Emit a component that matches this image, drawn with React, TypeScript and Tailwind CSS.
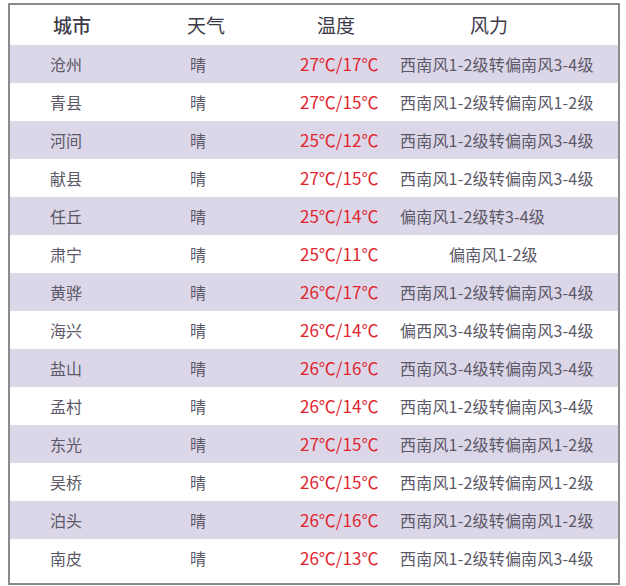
const rows: { city: string; temp: string; wind: string; center?: boolean }[] = [
  { city: "沧州", temp: "27℃/17℃", wind: "西南风1-2级转偏南风3-4级" },
  { city: "青县", temp: "27℃/15℃", wind: "西南风1-2级转偏南风1-2级" },
  { city: "河间", temp: "25℃/12℃", wind: "西南风1-2级转偏南风3-4级" },
  { city: "献县", temp: "27℃/15℃", wind: "西南风1-2级转偏南风3-4级" },
  { city: "任丘", temp: "25℃/14℃", wind: "偏南风1-2级转3-4级" },
  { city: "肃宁", temp: "25℃/11℃", wind: "偏南风1-2级", center: true },
  { city: "黄骅", temp: "26℃/17℃", wind: "西南风1-2级转偏南风3-4级" },
  { city: "海兴", temp: "26℃/14℃", wind: "偏西风3-4级转偏南风3-4级" },
  { city: "盐山", temp: "26℃/16℃", wind: "西南风3-4级转偏南风3-4级" },
  { city: "孟村", temp: "26℃/14℃", wind: "西南风1-2级转偏南风3-4级" },
  { city: "东光", temp: "27℃/15℃", wind: "西南风1-2级转偏南风1-2级" },
  { city: "吴桥", temp: "26℃/15℃", wind: "西南风1-2级转偏南风1-2级" },
  { city: "泊头", temp: "26℃/16℃", wind: "西南风1-2级转偏南风1-2级" },
  { city: "南皮", temp: "26℃/13℃", wind: "西南风1-2级转偏南风3-4级" },
];

export default function App() {
  return (
    <div
      className="w-[626px] h-[586px] bg-white pt-[3px] pl-[8px]"
      style={{ fontFamily: '"Noto Sans CJK SC", "Noto Sans", sans-serif' }}
    >
      <div className="w-[612px] h-[582px] border-2 border-[#8a8a8a] bg-white">
        {/* Header */}
        <div className="flex h-[40px] items-center text-[19px] text-[#3d3a4a]">
          <div className="w-[177px] pl-[43px] font-medium">城市</div>
          <div className="w-[103px]">天气</div>
          <div className="w-[110px] pl-[27px]">温度</div>
          <div className="flex-1 pl-[70px]">风力</div>
        </div>

        {/* Rows */}
        {rows.map((r, i) => (
          <div
            key={r.city}
            className={
              "flex h-[38px] items-center text-[16px] text-[#5b5868] " +
              (i % 2 === 0 ? "bg-[#dcd7e8]" : "bg-white")
            }
          >
            <div className="w-[177px] pl-[40px]">{r.city}</div>
            <div className="w-[103px] pl-[3px]">晴</div>
            <div className="w-[110px] pl-[10px] text-[17px] text-[#e0262f]">{r.temp}</div>
            <div
              className={
                "flex-1 tracking-[0.2px] " + (r.center ? "pl-[49px]" : "pl-[0px]")
              }
            >
              {r.wind}
            </div>
          </div>
        ))}
      </div>
    </div>
  );
}
